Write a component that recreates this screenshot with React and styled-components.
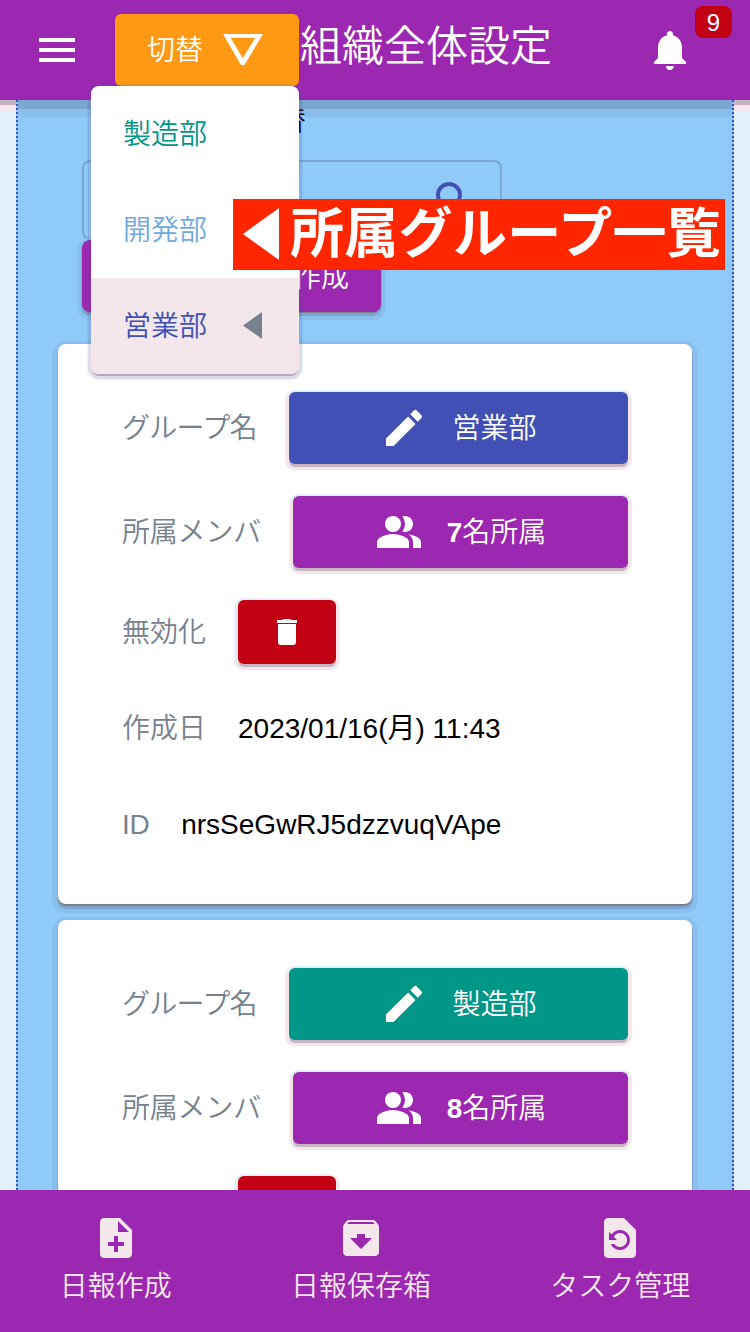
import React from 'react';
import styled, { createGlobalStyle } from 'styled-components';
import {
  MdMenu, MdNotifications, MdEdit, MdPeopleAlt,
  MdNoteAdd, MdArchive, MdRestorePage, MdSearch,
} from 'react-icons/md';

const color = {
  purple: '#9c27b0',
  indigo: '#4050b5',
  teal: '#009688',
  sky: '#70aadc',
  red: '#c10014',
  orange: '#ff9914',
  blush: '#f3e7eb',
  slate: '#77818e',
};

const GlobalStyle = createGlobalStyle`
  * { box-sizing: border-box; }
  body {
    margin: 0;
    background: #e3f2fd;
    font-family: "Liberation Sans", "Noto Sans CJK JP", sans-serif;
    font-size: 28px;
    font-weight: 350;
    line-height: 40px;
    color: #000;
  }
  svg { flex: none; }
`;

const Screen = styled.div`
  position: relative;
  display: flex;
  flex-direction: column;
  height: 1332px;
  width: 750px;
  overflow: hidden;
`;

const Header = styled.header`
  flex: none;
  display: flex;
  align-items: center;
  height: 100px;
  padding-left: 33px;
  background: ${color.purple};
  color: #fff;
  box-shadow: 0 5px 0 #c4b4c4, 0 12px 0 ${color.blush};
`;

const Text = styled.span`
  padding-top: 2px;
`;

const Switcher = styled.div`
  position: relative;
  z-index: 2;
  margin-left: 34px;
`;

const SwitchButton = styled.button`
  display: flex;
  align-items: center;
  gap: 20px;
  width: 184px;
  height: 72px;
  padding: 0 0 0 32px;
  border: 0;
  border-radius: 6px;
  background: ${color.orange};
  color: #fff;
  font: inherit;
`;

const Menu = styled.ul`
  position: absolute;
  top: 72px;
  right: 0;
  width: 208px;
  margin: 0;
  padding: 0;
  list-style: none;
  border-radius: 8px;
  background: #fff;
  box-shadow: 0 3px 0 -1px rgba(60, 20, 55, 0.25), 0 2px 0 3px rgba(150, 30, 70, 0.1),
    0 2px 0 4px rgba(30, 130, 220, 0.1);
`;

const MenuItem = styled.li`
  display: flex;
  align-items: center;
  gap: 36px;
  height: 96px;
  padding-left: 32px;
  color: ${(p) => p.$color};
  background: ${(p) => (p.$selected ? color.blush : 'transparent')};
  border-radius: ${(p) => (p.$selected ? '0 0 8px 8px' : '0')};

  svg { margin-bottom: 1px; }
`;

const Title = styled.h1`
  flex: 1;
  margin: 0 0 6px 1px;
  font-size: 42px;
  font-weight: inherit;
  line-height: 60px;
`;

const Bell = styled.div`
  position: relative;
  display: flex;
  width: 104px;
  height: 48px;
`;

const Badge = styled.span`
  position: absolute;
  top: -20px;
  left: 49px;
  width: 37px;
  height: 32px;
  border-radius: 8px;
  background: ${color.red};
  font-size: 24px;
  line-height: 33px;
  text-align: center;
`;

const Main = styled.main`
  flex: 1;
  min-height: 0;
  margin: 0 16px;
  padding: 0 40px;
  overflow: hidden;
  border: dotted ${color.indigo};
  border-width: 0 2px;
  background: #90caf9;
  box-shadow: inset 0 9px 0 #7aa6d1, inset 0 17px 0 #8abfed;
`;

const Tools = styled.section`
  display: flex;
  flex-direction: column;
  align-items: flex-start;
  height: 244px;
  padding-left: 24px;
`;

const ToolsLabel = styled.div`
  width: 224px;
  height: 60px;
  padding-top: 2px;
  text-align: right;
`;

const SearchBox = styled.div`
  display: flex;
  align-items: center;
  justify-content: flex-end;
  width: 420px;
  height: 80px;
  padding-right: 22px;
  border: 2px solid #7aa6d1;
  border-radius: 8px;
  color: ${color.indigo};
`;

const CreateButton = styled.button`
  width: 299px;
  height: 72px;
  padding: 3px 32px 0 0;
  border: 0;
  border-radius: 8px;
  background: ${color.purple};
  color: #fff;
  font: inherit;
  text-align: right;
  box-shadow: 0 2px 0 -1px ${color.slate}, 0 3px 0 1px #7aa6d1, 0 3px 0 5px #89bfec;
`;

const Card = styled.article`
  display: flex;
  flex-direction: column;
  gap: 32px;
  width: 634px;
  margin-bottom: 16px;
  padding: 48px 64px;
  border-radius: 8px;
  background: #fff;
  box-shadow: 0 2px 0 ${color.slate}, 0 4px 0 1px #7aa6d1, 0 3px 0 6px #89bfec;
`;

const Row = styled.div`
  display: flex;
  align-items: center;
  gap: 32px;
  height: ${(p) => p.$height || 64}px;
`;

const Label = styled(Text)`
  flex: none;
  color: ${color.slate};
  letter-spacing: ${(p) => p.$tracking || 0}px;
`;

const Value = styled(Text)`
  font-weight: 400;
  white-space: nowrap;
`;

const Action = styled.button`
  display: flex;
  align-items: center;
  justify-content: center;
  gap: 24px;
  flex: ${(p) => (p.$compact ? 'none' : 1)};
  width: ${(p) => (p.$compact ? '98px' : 'auto')};
  height: 100%;
  padding: 0;
  border: 0;
  border-radius: 6px;
  background: ${(p) => p.$color};
  color: #fff;
  font: inherit;
  box-shadow: 0 3px 0 #c7b5c3, 0 3px 0 3px ${color.blush}, 0 2px 0 4px #e3effb;
`;

const Count = styled.b`
  font-weight: 700;
`;

const Callout = styled.div`
  position: absolute;
  z-index: 3;
  top: 199px;
  left: 233px;
  display: flex;
  align-items: center;
  gap: 11px;
  width: 492px;
  height: 71px;
  padding: 0 0 2px 10px;
  background: #ff2600;
  color: #fff;
  font-size: 54px;
  font-weight: 700;
  line-height: 70px;
  letter-spacing: 0.3px;
  white-space: nowrap;
`;

const Footer = styled.footer`
  flex: none;
  display: flex;
  justify-content: space-around;
  height: 142px;
  padding-top: 24px;
  background: ${color.purple};
  color: ${color.blush};
`;

const Tab = styled.div`
  display: flex;
  flex-direction: column;
  align-items: center;
  gap: 5px;
`;

function LeftTriangle({ width, height, fill }) {
  return (
    <svg width={width} height={height} viewBox="0 0 10 10" preserveAspectRatio="none" fill={fill}>
      <path d="M10 0V10L0 5Z" />
    </svg>
  );
}

function TrashIcon() {
  return (
    <svg width="20" height="26" viewBox="0 0 20 26" fill="#fff">
      <path d="M0 1H5L6.500 0H13L14.500 1H20V4H0Z" />
      <path d="M1 5H19V23Q19 26 16 26H4Q1 26 1 23Z" />
    </svg>
  );
}

function GroupCard({ name, tint, members, created, id }) {
  return (
    <Card>
      <Row $height={72}>
        <Label $tracking={-0.7}>グループ名</Label>
        <Action $color={tint}><MdEdit size={48} /><Text>{name}</Text></Action>
      </Row>
      <Row $height={72}>
        <Label $tracking={-0.2}>所属メンバ</Label>
        <Action $color={color.purple}>
          <MdPeopleAlt size={48} />
          <Text><Count>{members}</Count>名所属</Text>
        </Action>
      </Row>
      <Row>
        <Label>無効化</Label>
        <Action $compact $color={color.red}><TrashIcon /></Action>
      </Row>
      {created && <Row><Label>作成日</Label><Value>{created}</Value></Row>}
      {id && <Row><Label $tracking={-0.4}>ID</Label><Value>{id}</Value></Row>}
    </Card>
  );
}

export default function App() {
  return (
    <Screen>
      <GlobalStyle />
      <Header>
        <MdMenu size={48} />
        <Switcher>
          <SwitchButton>
            <Text>切替</Text>
            <svg width="40" height="32" viewBox="0 0 40 32" fill="#fff">
              <path fillRule="evenodd" d="M0 0H40L21.500 31H18ZM7.700 3.800L19.800 24.300L32.300 3.800Z" />
            </svg>
          </SwitchButton>
          <Menu>
            <MenuItem $color={color.teal}><Text>製造部</Text></MenuItem>
            <MenuItem $color={color.sky}><Text>開発部</Text></MenuItem>
            <MenuItem $color={color.indigo} $selected>
              <Text>営業部</Text>
              <LeftTriangle width={19} height={27} fill={color.slate} />
            </MenuItem>
          </Menu>
        </Switcher>
        <Title>組織全体設定</Title>
        <Bell><MdNotifications size={48} /><Badge>9</Badge></Bell>
      </Header>
      <Main>
        <Tools>
          <ToolsLabel>切替</ToolsLabel>
          <SearchBox><MdSearch size={48} /></SearchBox>
          <CreateButton>作成</CreateButton>
        </Tools>
        <GroupCard name="営業部" tint={color.indigo} members={7} created="2023/01/16(月) 11:43" id="nrsSeGwRJ5dzzvuqVApe" />
        <GroupCard name="製造部" tint={color.teal} members={8} />
      </Main>
      <Callout>
        <LeftTriangle width={36} height={52} fill="#fff" />
        所属グループ一覧
      </Callout>
      <Footer>
        <Tab><MdNoteAdd size={48} />日報作成</Tab>
        <Tab><MdArchive size={48} />日報保存箱</Tab>
        <Tab><MdRestorePage size={48} />タスク管理</Tab>
      </Footer>
    </Screen>
  );
}
